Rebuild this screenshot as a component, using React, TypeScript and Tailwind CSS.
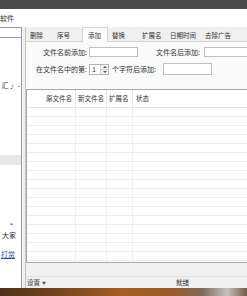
const tabs = [
  { label: "删除", w: "w-[27px]" },
  { label: "序号", w: "w-[29px]" },
  { label: "添加", w: "w-[26px]", active: true },
  { label: "替换", w: "w-[30px]" },
  { label: "扩展名", w: "w-[28px]" },
  { label: "日期时间", w: "w-[35px]" },
  { label: "去除广告", w: "w-[40px]" },
];

const rows = Array.from({ length: 18 }, (_, i) => i);

function Spinner() {
  return (
    <div className="ml-[2px] flex h-[11px] w-[20px] items-center border border-[#b4b4b4] bg-white">
      <span className="flex-1 pl-[2px] leading-none">1</span>
      <div className="flex h-full w-[8px] flex-col border-l border-[#d0d0d0] bg-[#f4f4f4]">
        <div className="flex flex-1 items-center justify-center border-b border-[#d0d0d0]">
          <div className="h-0 w-0 border-x-[2px] border-b-[2px] border-x-transparent border-b-[#555]" />
        </div>
        <div className="flex flex-1 items-center justify-center">
          <div className="h-0 w-0 border-x-[2px] border-t-[2px] border-x-transparent border-t-[#555]" />
        </div>
      </div>
    </div>
  );
}

export default function App() {
  return (
    <div className="flex h-[296px] w-[247px] flex-col overflow-hidden bg-[#f0f0f0] font-['Noto_Sans_CJK_SC',sans-serif] text-[7px] text-[#333]">

      {/* ── Title bar ───────────────────────────────────────────── */}
      <div className="h-[9px] shrink-0 bg-[#4a4a4a]" />

      {/* ── Menu bar ────────────────────────────────────────────── */}
      <div className="flex h-[18px] shrink-0 items-center bg-white">
        <span className="leading-none">软件</span>
      </div>

      {/* ── Main area: left list | splitter | right panel ───────── */}
      <div className="flex min-h-0 flex-1">

        {/* left panel */}
        <div className="flex w-[22px] shrink-0 flex-col overflow-hidden whitespace-nowrap border-r border-[#9a9a9a] bg-white">
          <div className="h-[11px] shrink-0 border-y border-[#9a9a9a] bg-white" />
          <div className="mt-[43px] flex h-[9px] items-center justify-end gap-[1px] pr-[1px] leading-none">
            <span>汇</span>
            <span className="text-[5px]">♪</span>
            <span className="ml-[2px]">-</span>
          </div>
          <div className="mt-[65px] h-[10px] bg-[#e6e6e6]" />
          <div className="mt-[57px] flex h-[9px] items-center justify-end pr-[8px] leading-none">“</div>
          <div className="flex h-[9px] items-center justify-end pr-[5px] leading-none">大家</div>
          <div className="mt-[10px] flex h-[9px] items-center justify-end pr-[6px] leading-none text-[#2a3fc7] underline">打赏</div>
        </div>

        {/* splitter */}
        <div className="w-[4px] shrink-0 border-r border-[#c4c4c4] bg-[#f0f0f0]" />

        {/* right panel */}
        <div className="flex min-w-0 flex-1 flex-col">

          {/* tab strip */}
          <div className="flex h-[15px] shrink-0 items-end whitespace-nowrap text-[6.5px]">
            {tabs.map((t) =>
              t.active ? (
                <div
                  key={t.label}
                  className={`${t.w} flex h-[15px] shrink-0 items-center border-x border-t border-[#d4d4d4] bg-[#fafafa] pl-[5px] leading-none`}
                >
                  {t.label}
                </div>
              ) : (
                <div
                  key={t.label}
                  className={`${t.w} flex h-[13px] shrink-0 items-center border-b border-[#d4d4d4] pl-[4px] leading-none`}
                >
                  {t.label}
                </div>
              )
            )}
            <div className="flex-1 border-b border-[#d4d4d4]" />
          </div>

          {/* tab page */}
          <div className="flex h-[47px] shrink-0 flex-col whitespace-nowrap bg-[#fafafa] pt-[5px]">
            <div className="flex h-[10px] items-center">
              <span className="w-[61px] shrink-0 text-right leading-none">文件名前添加:</span>
              <div className="ml-[2px] h-[10px] w-[49px] shrink-0 border border-[#c0c0c0] bg-white" />
              <span className="w-[62px] shrink-0 text-right leading-none">文件名后添加:</span>
              <div className="ml-[4px] h-[10px] w-[48px] shrink-0 border border-[#c0c0c0] bg-white" />
            </div>
            <div className="mt-[6px] flex h-[12px] items-center">
              <span className="w-[61px] shrink-0 text-right leading-none">在文件名中的第:</span>
              <Spinner />
              <span className="ml-[3px] w-[47px] shrink-0 leading-none">个字符后添加:</span>
              <div className="ml-[4px] h-[12px] w-[49px] shrink-0 border border-[#c0c0c0] bg-white" />
            </div>
          </div>

          {/* list view */}
          <div className="flex h-[174px] shrink-0 flex-col overflow-hidden border-y border-l border-[#a8a8a8] bg-white text-[6.5px]">
            <div className="flex h-[18px] shrink-0 items-center whitespace-nowrap border-b border-[#e5e5e5]">
              <div className="flex h-full w-[49px] shrink-0 items-center justify-end border-r border-[#e5e5e5] pr-[3px] leading-none">原文件名</div>
              <div className="flex h-full w-[31px] shrink-0 items-center border-r border-[#e5e5e5] pl-[2px] leading-none">新文件名</div>
              <div className="flex h-full w-[26px] shrink-0 items-center border-r border-[#e5e5e5] pl-[2px] leading-none">扩展名</div>
              <div className="flex h-full flex-1 items-center pl-[3px] leading-none">状态</div>
            </div>
            {rows.map((r) => (
              <div key={r} className="flex h-[9px] shrink-0 border-b border-[#ededed]">
                <div className="w-[49px] shrink-0 border-r border-[#f0f0f0]" />
                <div className="w-[31px] shrink-0 border-r border-[#f0f0f0]" />
                <div className="w-[26px] shrink-0 border-r border-[#f0f0f0]" />
                <div className="flex-1" />
              </div>
            ))}
          </div>

          {/* spacer under list */}
          <div className="h-[14px] shrink-0 border-b border-[#e2e2e2]" />

          {/* status bar */}
          <div className="flex h-[11px] shrink-0 items-center whitespace-nowrap text-[6.5px]">
            <span className="pl-[1px] leading-none">设置</span>
            <span className="ml-[2px] text-[4px] leading-none text-[#555]">▼</span>
            <span className="ml-[130px] leading-none">就绪</span>
          </div>
        </div>
      </div>

      {/* ── Desktop wallpaper below the window ─────────────────── */}
      <div className="h-[8px] shrink-0 bg-[linear-gradient(90deg,#4e3018_0%,#7a461c_25%,#a85d20_50%,#9a5a25_70%,#7d6a5c_82%,#c9c2ba_92%,#6e5a48_100%)]" />
    </div>
  );
}
